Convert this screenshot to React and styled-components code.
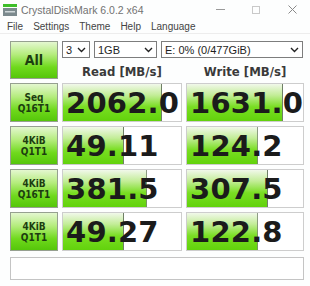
import React from 'react'
import styled, { createGlobalStyle } from 'styled-components'

const GlobalStyle = createGlobalStyle`
  html, body {
    margin: 0;
    padding: 0;
    background: #fdfefe;
  }
  body {
    font-family: "Liberation Sans", Arial, sans-serif;
  }
`

const Window = styled.div`
  width: 310px;
  height: 286px;
  background: #fdfefe;
  display: flex;
  flex-direction: column;
  overflow: hidden;
`

const TitleBar = styled.div`
  height: 19px;
  display: flex;
  align-items: center;
  padding-left: 3px;
`

const Title = styled.span`
  margin-left: 4px;
  font-size: 10.5px;
  color: #727272;
  flex: 1;
`

const WinButtons = styled.div`
  display: flex;
  align-items: center;
  height: 19px;
`

const WinButton = styled.div`
  width: ${({ w }) => w}px;
  height: 19px;
  display: flex;
  align-items: center;
  justify-content: center;
`

const MenuBar = styled.div`
  height: 14px;
  display: flex;
  align-items: center;
  gap: 10px;
  padding-left: 7px;
  border-bottom: 1px solid #ededed;
`

const MenuItem = styled.span`
  font-size: 10px;
  color: #444;
`

const Main = styled.div`
  padding: 7px 7px 0 10px;
`

const Grid = styled.div`
  display: grid;
  grid-template-columns: 48px 120px 118px;
  grid-template-rows: 17px 17px repeat(4, 39px);
  column-gap: 4px;
  row-gap: 4px;
`

const LabelButton = styled.div`
  border: 1px solid #96a090;
  box-sizing: border-box;
  background: linear-gradient(to bottom, #e4f7d0 0%, #b4ec7c 35%, #6fd91c 70%, #55c60a 100%);
  display: flex;
  flex-direction: column;
  align-items: center;
  justify-content: center;
  font-family: "DejaVu Sans Condensed", "DejaVu Sans", sans-serif;
  font-weight: bold;
  color: #1c3d10;
  font-size: ${({ big }) => (big ? '14px' : '10px')};
  line-height: ${({ big }) => (big ? '16px' : '11px')};
  grid-row: ${({ span }) => (span ? '1 / span 2' : 'auto')};
`

const Controls = styled.div`
  grid-column: 2 / span 2;
  display: flex;
  gap: 4px;
`

const Select = styled.div`
  width: ${({ w }) => w}px;
  height: 17px;
  box-sizing: border-box;
  border: 1px solid #7d7d7d;
  background: #fff;
  display: flex;
  align-items: center;
  justify-content: space-between;
  padding: 0 3px 0 3px;
  font-size: 11px;
  color: #1e1e1e;
`

const Header = styled.div`
  display: flex;
  align-items: flex-end;
  justify-content: center;
  font-family: "DejaVu Sans Condensed", "DejaVu Sans", sans-serif;
  font-weight: bold;
  font-size: 13px;
  line-height: 14px;
  color: #3a3a3a;
`

const Value = styled.div`
  border: 1px solid #cdcdcd;
  box-sizing: border-box;
  background-color: #fff;
  background-image:
    linear-gradient(to right, transparent calc(100% - 1px), #6f7f66 calc(100% - 1px)),
    linear-gradient(to bottom, #f1f8ea 0%, #c3ed98 30%, #79de22 62%, #62d20c 100%);
  background-repeat: no-repeat;
  display: flex;
  align-items: center;
  padding-left: 3px;
  font-family: "DejaVu Sans", sans-serif;
  font-weight: bold;
  font-size: 29px;
  letter-spacing: 0.2px;
  color: #1b1b1b;
`

const Status = styled.div`
  margin-top: 6px;
  height: 23px;
  box-sizing: border-box;
  width: 294px;
  border: 1px solid #c4c4c4;
  background: #fff;
`

const Chevron = () => (
  <svg width="9" height="6" viewBox="0 0 9 6">
    <path d="M1 1 L4.5 4.5 L8 1" fill="none" stroke="#222" strokeWidth="1.4" />
  </svg>
)

const AppIcon = () => (
  <svg width="14" height="12" viewBox="0 0 14 12">
    <rect x="0" y="0" width="14" height="3" fill="#3fbf2a" />
    <rect x="0" y="4" width="14" height="8" fill="#7c8a8e" />
    <rect x="2" y="7" width="10" height="1.5" fill="#d0d8da" />
  </svg>
)

const rows = [
  { a: 'Seq', b: 'Q16T1', read: '2062.0', rp: 84, write: '1631.0', wp: 83 },
  { a: '4KiB', b: 'Q1T1', read: '49.11', rp: 52, write: '124.2', wp: 61 },
  { a: '4KiB', b: 'Q16T1', read: '381.5', rp: 71, write: '307.5', wp: 70 },
  { a: '4KiB', b: 'Q1T1', read: '49.27', rp: 52, write: '122.8', wp: 61 },
]

const App = () => (
  <Window>
    <GlobalStyle />
    <TitleBar>
      <AppIcon />
      <Title>CrystalDiskMark 6.0.2 x64</Title>
      <WinButtons>
        <WinButton w={36}>
          <svg width="9" height="2"><rect width="9" height="1" fill="#9a9a9a" /></svg>
        </WinButton>
        <WinButton w={36}>
          <svg width="8" height="8"><rect x="0.5" y="0.5" width="7" height="7" fill="none" stroke="#c9c9c9" /></svg>
        </WinButton>
        <WinButton w={36}>
          <svg width="9" height="9"><path d="M0.5 0.5 L8.5 8.5 M8.5 0.5 L0.5 8.5" stroke="#8a8a8a" strokeWidth="1" /></svg>
        </WinButton>
      </WinButtons>
    </TitleBar>
    <MenuBar>
      {['File', 'Settings', 'Theme', 'Help', 'Language'].map((m) => (
        <MenuItem key={m}>{m}</MenuItem>
      ))}
    </MenuBar>
    <Main>
      <Grid>
        <LabelButton big span>All</LabelButton>
        <Controls>
          <Select w={28}><span>3</span><Chevron /></Select>
          <Select w={63}><span>1GB</span><Chevron /></Select>
          <Select w={142}><span>E: 0% (0/477GiB)</span><Chevron /></Select>
        </Controls>
        <Header>Read [MB/s]</Header>
        <Header>Write [MB/s]</Header>
        {rows.map((r, i) => (
          <React.Fragment key={i}>
            <LabelButton>
              <span>{r.a}</span>
              <span>{r.b}</span>
            </LabelButton>
            <Value style={{ backgroundSize: `${r.rp}% 100%, ${r.rp}% 100%` }}>{r.read}</Value>
            <Value style={{ backgroundSize: `${r.wp}% 100%, ${r.wp}% 100%` }}>{r.write}</Value>
          </React.Fragment>
        ))}
      </Grid>
      <Status />
    </Main>
  </Window>
)

export default App
